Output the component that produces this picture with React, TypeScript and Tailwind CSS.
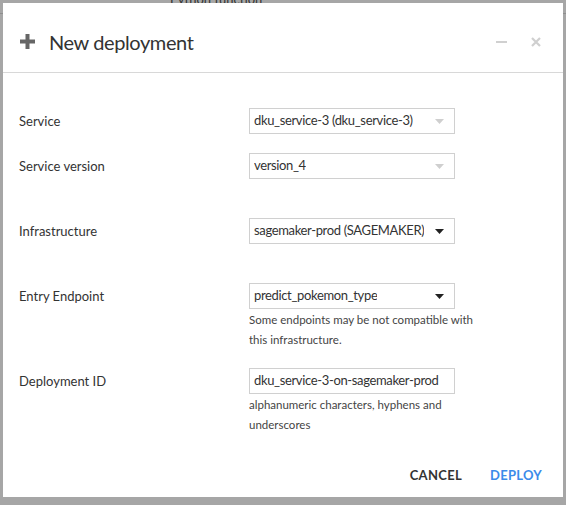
import { FC, ReactNode } from 'react';

const font = { fontFamily: 'Lato, "Noto Sans", sans-serif' };

const Caret: FC<{ muted?: boolean }> = ({ muted }) => (
  <svg width="9" height="5" viewBox="0 0 9 5" className="shrink-0">
    <path d="M0 0h9L4.5 5z" fill={muted ? '#cfcfcf' : '#222'} />
  </svg>
);

const Select: FC<{ value: string; disabled?: boolean }> = ({ value, disabled }) => (
  <div className="flex h-[26px] w-[206px] items-center justify-between border border-[#d0d0d0] bg-white pl-[4px] pr-[10px] text-[13px] tracking-[-0.35px] text-[#333]">
    <span className="truncate">{value}</span>
    <Caret muted={disabled} />
  </div>
);

const Row: FC<{ label: string; children: ReactNode; className?: string }> = ({
  label,
  children,
  className,
}) => (
  <div className={`flex ${className ?? ''}`}>
    <div className="w-[230px] shrink-0 pt-[4px] text-[13px] text-[#333]">{label}</div>
    <div className="flex flex-col">{children}</div>
  </div>
);

const Help: FC<{ children: ReactNode }> = ({ children }) => (
  <p className="w-[240px] pt-[1px] text-[11.5px] leading-[20px] text-[#444]">{children}</p>
);

export default function App() {
  return (
    <div className="relative h-[505px] w-[566px] overflow-hidden bg-[#a6a6a6]" style={font}>
      <div className="absolute left-[170px] top-[-10px] text-[13px] text-[#333]">Python function</div>
      <div className="absolute left-0 right-0 top-[13px] h-px bg-[#8e8e8e]" />
      <div className="absolute left-[3px] top-[3px] flex h-[494px] w-[560px] flex-col bg-white">
        <div className="flex h-[70px] shrink-0 items-center border-b border-[#d8d8d8] pl-[17px] pr-[22px] pt-[8px]">
          <svg width="15" height="15" viewBox="0 0 15 15">
            <path d="M5.5 0h4v5.5H15v4H9.5V15h-4V9.5H0v-4h5.5z" fill="#666" />
          </svg>
          <span className="ml-[14px] text-[20px] tracking-[-0.4px] text-[#333]">New deployment</span>
          <div className="ml-auto flex items-center gap-[24px]">
            <div className="h-[2px] w-[11px] bg-[#d0d0d0]" />
            <svg width="10" height="10" viewBox="0 0 10 10">
              <path d="M1 1l8 8M9 1l-8 8" stroke="#cfcfcf" strokeWidth="2.2" />
            </svg>
          </div>
        </div>
        <div className="flex flex-col px-[16px] pt-[35px]">
          <Row label="Service">
            <Select value="dku_service-3 (dku_service-3)" disabled />
          </Row>
          <Row label="Service version" className="mt-[19px]">
            <Select value="version_4" disabled />
          </Row>
          <Row label="Infrastructure" className="mt-[39px]">
            <Select value="sagemaker-prod (SAGEMAKER)" />
          </Row>
          <Row label="Entry Endpoint" className="mt-[39px]">
            <Select value="predict_pokemon_type" />
            <Help>Some endpoints may be not compatible with this infrastructure.</Help>
          </Row>
          <Row label="Deployment ID" className="mt-[18px]">
            <div className="flex h-[26px] w-[206px] items-center border border-[#d0d0d0] pl-[4px] text-[13px] tracking-[-0.35px] text-[#333]">
              dku_service-3-on-sagemaker-prod
            </div>
            <Help>alphanumeric characters, hyphens and underscores</Help>
          </Row>
        </div>
        <div className="mt-auto flex justify-end gap-[28px] pb-[12px] pr-[21px] text-[13px] font-bold tracking-[0.3px]">
          <button className="text-[#333]">CANCEL</button>
          <button className="text-[#3b8bea]">DEPLOY</button>
        </div>
      </div>
    </div>
  );
}
